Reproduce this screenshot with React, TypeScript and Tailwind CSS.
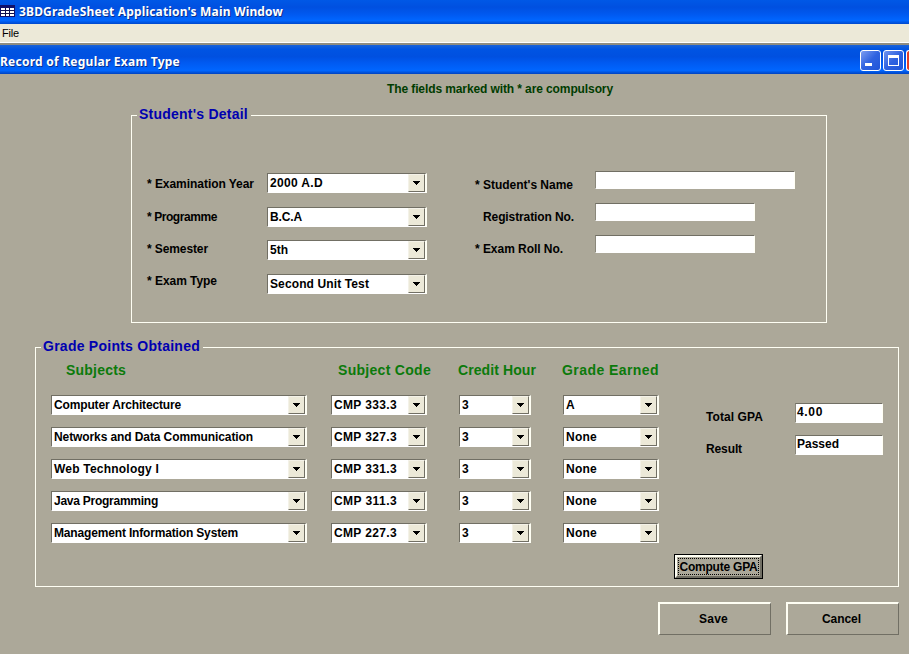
import React, { useLayoutEffect, useRef } from "react";

/* A single line of text, letter-spaced to fill the given width like the original bitmap fonts. */
function Txt({ w, children, className = "" }: { w: number; children: string; className?: string }) {
  const ref = useRef<HTMLSpanElement>(null);
  useLayoutEffect(() => {
    const el = ref.current;
    if (!el) return;
    el.style.letterSpacing = "0px";
    const natural = el.getBoundingClientRect().width;
    el.style.letterSpacing = `${(w - natural) / children.length}px`;
  }, [w, children]);
  return (
    <span ref={ref} className={`inline-block shrink-0 whitespace-pre ${className}`}>
      {children}
    </span>
  );
}

function Combo({ text, tw, className }: { text: string; tw: number; className: string }) {
  return (
    <div className={`flex h-5 items-center border border-r-2 border-t-[#716f64] border-l-[#716f64] border-r-[#fffff4] border-b-white bg-white pl-[2px] ${className}`}>
      <Txt w={tw}>{text}</Txt>
      <div className="ml-auto flex h-[18px] w-[17px] shrink-0 items-center justify-center border border-t-[#f4f2e8] border-l-[#f4f2e8] border-r-[#716f64] border-b-[#716f64] bg-[#ece9d8]">
        <svg width="7" height="4" viewBox="0 0 7 4" shapeRendering="crispEdges">
          <path d="M0 0H7V1H6V2H5V3H4V4H3V3H2V2H1V1H0Z" fill="#000" />
        </svg>
      </div>
    </div>
  );
}

function Field({ text = "", tw = 0, className }: { text?: string; tw?: number; className: string }) {
  return (
    <div className={`border border-t-[#716f64] border-l-[#8a877a] border-r-[#fffff4] border-b-white bg-white pl-[1px] leading-4 ${className}`}>
      {text && <Txt w={tw}>{text}</Txt>}
    </div>
  );
}

const details = [
  { label: "* Examination Year", lw: 107, value: "2000 A.D", vw: 53, row: "h-[34px]", pad: "pt-[3px]" },
  { label: "* Programme", lw: 70, value: "B.C.A", vw: 32, row: "h-[33px]", pad: "pt-[2px]" },
  { label: "* Semester", lw: 61, value: "5th", vw: 18, row: "h-[34px]", pad: "pt-[1px]" },
  { label: "* Exam Type", lw: 70, value: "Second Unit Test", vw: 99, row: "h-5", pad: "-mt-[1px]" },
];

const students = [
  { label: "* Student's Name", lw: 98, pad: "pl-0", box: "w-[200px]" },
  { label: "Registration No.", lw: 91, pad: "pl-2", box: "w-40" },
  { label: "* Exam Roll No.", lw: 88, pad: "pl-0", box: "w-40" },
];

const subjects = [
  { name: "Computer Architecture", w: 127, code: "CMP 333.3", grade: "A", gw: 9 },
  { name: "Networks and Data Communication", w: 199, code: "CMP 327.3", grade: "None", gw: 31 },
  { name: "Web Technology I", w: 105, code: "CMP 331.3", grade: "None", gw: 31 },
  { name: "Java Programming", w: 104, code: "CMP 311.3", grade: "None", gw: 31 },
  { name: "Management Information System", w: 184, code: "CMP 227.3", grade: "None", gw: 31 },
];

const barText = "font-['Noto_Sans',sans-serif] text-[12px] font-bold text-white [text-shadow:1px_1px_0_#0a2f8a]";

export default function App() {
  return (
    <div className="flex h-[654px] w-[909px] flex-col overflow-hidden bg-[#aca899] font-['Liberation_Sans',Arial,sans-serif] text-[12px] leading-4 font-bold text-black">
      <header className="flex h-6 shrink-0 items-center bg-[linear-gradient(#0058e6_0%,#0050e0_30%,#0059f0_60%,#0066ff_85%,#0048cc_100%)]">
        <svg width="15" height="12" viewBox="0 0 15 12" shapeRendering="crispEdges" className="-mt-[3px]">
          <path fill="#10106a" d="M0 0H15V12H0Z" />
          <path fill="#fff" d="M1 3H14V11H1Z" />
          <path stroke="#10104a" d="M1 5.5H14M1 8.5H14M5.5 3V11M9.5 3V11" />
        </svg>
        <Txt w={264} className={`ml-1 ${barText}`}>3BDGradeSheet Application's Main Window</Txt>
      </header>
      <nav className="flex h-[21px] shrink-0 items-start border-b-2 border-b-[#8f8d80] bg-[#ece9d8] pt-[1px] pl-[2px] font-normal shadow-[inset_0_-1px_0_#fff]">
        <Txt w={17} className="text-[11px]">File</Txt>
      </nav>
      <div className="flex h-[29px] shrink-0 items-center bg-[linear-gradient(#1a63d8_0%,#0054e3_15%,#0050e0_40%,#0059f0_60%,#0066ff_88%,#0042c0_100%)] pt-[2px]">
        <Txt w={180} className={`mt-[2px] ${barText}`}>Record of Regular Exam Type</Txt>
        <div className="ml-auto flex gap-[2px]">
          <div className="flex h-[21px] w-[21px] items-end rounded-[3px] border border-white bg-[linear-gradient(135deg,#7d9df0,#2f62e0_50%,#1f55d8)] pb-1 pl-1">
            <div className="h-[3px] w-[7px] bg-white" />
          </div>
          <div className="flex h-[21px] w-[21px] items-center justify-center rounded-[3px] border border-white bg-[linear-gradient(135deg,#6f93ee,#2f62e0_50%,#1f55d8)]">
            <div className="h-[11px] w-[11px] border border-t-[3px] border-white" />
          </div>
          <div className="h-[21px] w-[3px] rounded-l-[3px] border border-r-0 border-white bg-[#e0402a]" />
        </div>
      </div>

      <main className="flex flex-col">
        <div className="flex h-[31px] pt-[7px] pl-[387px] text-[#003c00]">
          <Txt w={226}>The fields marked with * are compulsory</Txt>
        </div>

        <fieldset className="ml-[131px] h-[218px] w-[696px] border border-[#fffff4]">
          <legend className="ml-[5px] flex h-[20px] w-[114px] items-start pt-px pl-[2px] text-[14px] text-[#0000b0]">
            <Txt w={109}>Student's Detail</Txt>
          </legend>
          <div className="flex pt-12 pl-[15px]">
            <div className="w-[328px]">
              {details.map((d) => (
                <div key={d.label} className={`flex items-start ${d.row}`}>
                  <div className={`w-[120px] ${d.pad}`}>
                    <Txt w={d.lw}>{d.label}</Txt>
                  </div>
                  <Combo text={d.value} tw={d.vw} className="w-40" />
                </div>
              ))}
            </div>
            <div className="-mt-[2px] flex flex-col gap-[14px]">
              {students.map((s) => (
                <div key={s.label} className="flex h-[18px] items-start">
                  <div className={`w-[120px] pt-[6px] ${s.pad}`}>
                    <Txt w={s.lw}>{s.label}</Txt>
                  </div>
                  <Field className={`h-[18px] ${s.box}`} />
                </div>
              ))}
            </div>
          </div>
        </fieldset>

        <fieldset className="mt-[14px] ml-[35px] h-[250px] w-[864px] border border-[#fffff4]">
          <legend className="ml-[5px] flex h-[20px] w-[162px] items-start pt-px pl-[2px] text-[14px] text-[#0000b0]">
            <Txt w={157}>Grade Points Obtained</Txt>
          </legend>
          <div className="flex h-[38px] pt-[5px] pl-[30px] text-[14px] text-[#0b7a0b]">
            <div className="w-[272px]"><Txt w={60}>Subjects</Txt></div>
            <div className="w-[120px]"><Txt w={93}>Subject Code</Txt></div>
            <div className="w-[104px]"><Txt w={78}>Credit Hour</Txt></div>
            <Txt w={97}>Grade Earned</Txt>
          </div>
          <div className="flex pl-[15px]">
            <div className="flex w-[655px] flex-col gap-3">
              {subjects.map((s) => (
                <div key={s.name} className="flex">
                  <Combo text={s.name} tw={s.w} className="w-64" />
                  <Combo text={s.code} tw={63} className="ml-6 w-24" />
                  <Combo text="3" tw={7} className="ml-8 w-[72px]" />
                  <Combo text={s.grade} tw={s.gw} className="ml-8 w-24" />
                </div>
              ))}
            </div>
            <div className="flex flex-col gap-3 pt-2">
              <div className="flex h-5">
                <div className="w-[89px] pt-[6px]"><Txt w={57}>Total GPA</Txt></div>
                <Field text="4.00" tw={26} className="w-[88px]" />
              </div>
              <div className="flex h-5">
                <div className="w-[89px] pt-[6px]"><Txt w={36}>Result</Txt></div>
                <Field text="Passed" tw={42} className="w-[88px]" />
              </div>
            </div>
          </div>
          <div className="mt-[11px] ml-[638px] h-[25px] w-[89px] border border-black">
            <button className="flex h-[23px] w-[87px] items-center justify-center border-2 border-t-[#fffff4] border-l-[#fffff4] border-r-[#716f64] border-b-[#716f64]">
              <span className="flex h-[17px] w-[81px] items-center justify-center border border-dotted border-black">
                <Txt w={78}>Compute GPA</Txt>
              </span>
            </button>
          </div>
        </fieldset>

        <div className="mt-[15px] ml-[658px] flex gap-[15px]">
          <button className="flex h-[33px] w-[113px] items-center justify-center border border-t-2 border-l-2 border-t-[#fffff4] border-l-[#fffff4] border-r-[#716f64] border-b-[#716f64] pr-[3px]">
            <Txt w={29}>Save</Txt>
          </button>
          <button className="flex h-[33px] w-[113px] items-center justify-center border border-t-2 border-l-2 border-t-[#fffff4] border-l-[#fffff4] border-r-[#716f64] border-b-[#716f64] pr-[3px]">
            <Txt w={39}>Cancel</Txt>
          </button>
        </div>
      </main>
    </div>
  );
}
